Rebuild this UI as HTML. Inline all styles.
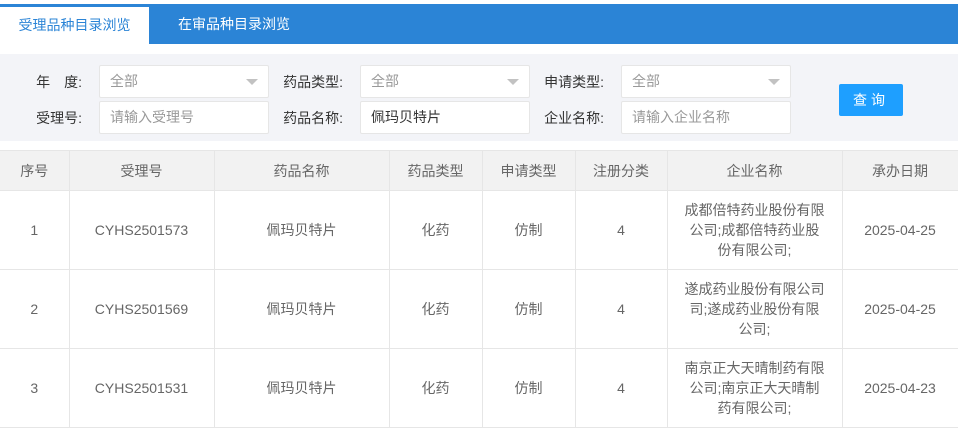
<!DOCTYPE html>
<html><head><meta charset="utf-8"><style>
*{margin:0;padding:0;box-sizing:border-box}
body{width:958px;height:426px;overflow:hidden;background:#fff;font-family:"Liberation Sans","Noto Sans CJK SC",sans-serif;font-size:13px;color:#666}
.bar{position:absolute;left:0;top:4px;width:958px;height:40px;background:#2b84d6}
.tab{position:absolute;top:0;height:40px;line-height:40px;font-size:14px;text-align:center}
.t1{left:0;width:149px;background:#fff;color:#2b84d6;top:3px;height:37px;line-height:37px}
.t2{left:149px;width:170px;color:#fff}
.filter{position:absolute;left:0;top:54px;width:958px;height:87px;background:#f3f4f8}
.lbl{position:absolute;color:#333;font-size:14px;text-align:right;width:90px}
.inp{position:absolute;width:170px;height:33px;background:#fff;border:1px solid #e6e6e6;border-radius:2px;line-height:31px;padding-left:10px;font-size:14px;color:#999}
.inp.v{color:#333}
.arr{position:absolute;right:10px;top:13px;width:0;height:0;border-left:6px solid transparent;border-right:6px solid transparent;border-top:6px solid #c2c2c2}
.btn{position:absolute;left:839px;top:30px;width:64px;height:32px;background:#1e9fff;color:#fff;font-size:14px;text-align:center;line-height:32px;border-radius:2px;letter-spacing:4px}
table{position:absolute;left:0;top:150px;border-collapse:collapse;width:958px;table-layout:fixed}
td,th{border:1px solid #e6e6e6;text-align:center;font-weight:normal;color:#666;font-size:14px;line-height:20px}
th{background:#f2f2f2;height:40px}
td{height:79px}
tr>*:first-child{border-left:none}
</style></head><body>
<div class="bar"><div class="tab t1">受理品种目录浏览</div><div class="tab t2">在审品种目录浏览</div></div>
<div class="filter">
<div class="lbl" style="left:-8px;top:18px">年　度:</div>
<div class="inp" style="left:99px;top:11px">全部<span class="arr"></span></div>
<div class="lbl" style="left:-8px;top:54px">受理号:</div>
<div class="inp" style="left:99px;top:47px">请输入受理号</div>
<div class="lbl" style="left:253px;top:18px">药品类型:</div>
<div class="inp" style="left:360px;top:11px">全部<span class="arr"></span></div>
<div class="lbl" style="left:253px;top:54px">药品名称:</div>
<div class="inp v" style="left:360px;top:47px">佩玛贝特片</div>
<div class="lbl" style="left:514px;top:18px">申请类型:</div>
<div class="inp" style="left:621px;top:11px">全部<span class="arr"></span></div>
<div class="lbl" style="left:514px;top:54px">企业名称:</div>
<div class="inp" style="left:621px;top:47px">请输入企业名称</div>
<div class="btn">查询</div>
</div>
<table>
<colgroup><col style="width:69px"><col style="width:145px"><col style="width:175px"><col style="width:93px"><col style="width:93px"><col style="width:92px"><col style="width:175px"><col style="width:116px"></colgroup>
<tr><th>序号</th><th>受理号</th><th>药品名称</th><th>药品类型</th><th>申请类型</th><th>注册分类</th><th>企业名称</th><th>承办日期</th></tr>
<tr><td>1</td><td>CYHS2501573</td><td>佩玛贝特片</td><td>化药</td><td>仿制</td><td>4</td><td>成都倍特药业股份有限<br>公司;成都倍特药业股<br>份有限公司;</td><td>2025-04-25</td></tr>
<tr><td>2</td><td>CYHS2501569</td><td>佩玛贝特片</td><td>化药</td><td>仿制</td><td>4</td><td>遂成药业股份有限公司<br>司;遂成药业股份有限<br>公司;</td><td>2025-04-25</td></tr>
<tr><td>3</td><td>CYHS2501531</td><td>佩玛贝特片</td><td>化药</td><td>仿制</td><td>4</td><td>南京正大天晴制药有限<br>公司;南京正大天晴制<br>药有限公司;</td><td>2025-04-23</td></tr>
</table>
</body></html>
